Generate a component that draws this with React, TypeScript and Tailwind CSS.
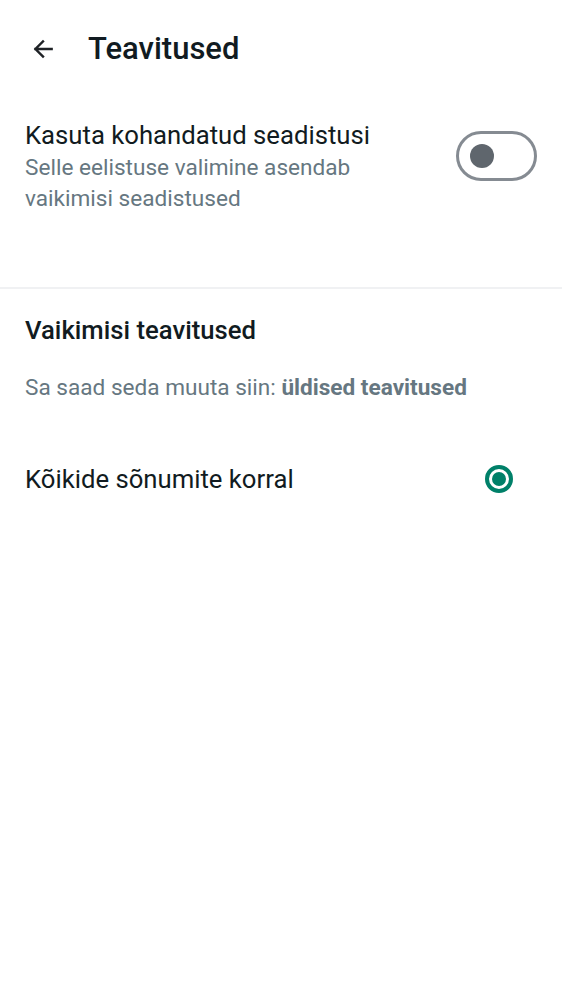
import React from 'react';

const font = { fontFamily: 'Roboto, "Noto Sans", sans-serif' };

export default function App() {
  return (
    <div className="min-h-[1000px] w-full bg-white text-[#111b21]" style={font}>
      {/* Header */}
      <div className="flex h-[98px] items-center pl-[30px]">
        <svg width="26" height="26" viewBox="0 0 24 24" fill="none" stroke="#1f2226" strokeWidth="2.2" strokeLinecap="square">
          <path d="M20 12H5M12 5l-7 7 7 7" />
        </svg>
        <h1 className="ml-[32px] text-[31px] font-medium leading-[36px]">Teavitused</h1>
      </div>

      {/* Custom settings toggle */}
      <div className="flex items-start justify-between pl-[25px] pr-[25px] pt-[21px] pb-[73px]">
        <div className="max-w-[380px]">
          <div className="text-[25.7px] leading-[32px]">Kasuta kohandatud seadistusi</div>
          <div className="mt-[1px] text-[22.6px] leading-[31px] text-[#667781]">
            Selle eelistuse valimine asendab vaikimisi seadistused
          </div>
        </div>
        <div className="mt-[12px] flex h-[50px] w-[81px] shrink-0 items-center rounded-full border-[3px] border-[#858b92] pl-[11px]">
          <div className="h-[24px] w-[24px] rounded-full bg-[#5f666d]" />
        </div>
      </div>

      <div className="h-[2px] bg-[#f0f1f3]" />

      {/* Defaults */}
      <div className="px-[25px] pt-[25px]">
        <div className="text-[25.7px] font-medium leading-[32px]">Vaikimisi teavitused</div>
        <div className="mt-[27px] text-[22.6px] leading-[30px] text-[#667781]">
          Sa saad seda muuta siin: <span className="font-bold">üldised teavitused</span>
        </div>
      </div>

      <div className="flex items-center justify-between pl-[25px] pr-[49px] pt-[60px]">
        <div className="text-[25.7px] leading-[32px]">Kõikide sõnumite korral</div>
        <div className="flex h-[28px] w-[28px] items-center justify-center rounded-full border-[4px] border-[#008069]">
          <div className="h-[14px] w-[14px] rounded-full bg-[#008069]" />
        </div>
      </div>
    </div>
  );
}
